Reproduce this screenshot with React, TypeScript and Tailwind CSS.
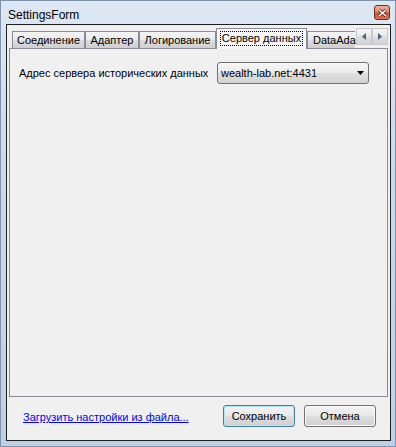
import React from 'react';

const font = "font-['Liberation_Sans',Arial,sans-serif]";

const SettingsForm = () => {
  const tabs = [
    { label: 'Соединение', width: 'w-[73px]' },
    { label: 'Адаптер', width: 'w-[54px]' },
    { label: 'Логирование', width: 'w-[77px]' },
  ];

  return (
    <div className={`w-[396px] h-[447px] flex flex-col border border-[#8193ab] bg-[linear-gradient(to_bottom,#dde8f4_0%,#cddcee_30%,#bcd0e7_100%)] ${font}`}>
      {/* title bar */}
      <div className="h-[23px] flex items-start justify-between pl-[7px] pr-[5px]">
        <span className="text-[12px] leading-[14px] mt-[7px] text-black">SettingsForm</span>
        <button className="mt-[4px] w-[16px] h-[15px] rounded-[3px] border border-[#6e2d22] bg-[linear-gradient(to_bottom,#eeb6a4_0%,#e0846a_45%,#cf5536_55%,#de7356_100%)] flex items-center justify-center">
          <svg width="9" height="8" viewBox="0 0 9 8">
            <path d="M1 1 L8 7 M8 1 L1 7" stroke="#5a1e14" strokeWidth="3" />
            <path d="M1 1 L8 7 M8 1 L1 7" stroke="#ffffff" strokeWidth="1.6" />
          </svg>
        </button>
      </div>

      {/* client area */}
      <div className="ml-[5px] mr-[4px] h-[417px] border border-[#1e1e1e] bg-[#f0f0f0] flex flex-col">
        {/* tab strip */}
        <div className="mt-[3px] h-[20px] flex items-end pl-[5px] mr-[2px] relative">
          {tabs.map((tab) => (
            <div
              key={tab.label}
              className={`${tab.width} h-[17px] shrink-0 border border-b-0 border-[#898c95] bg-[linear-gradient(to_bottom,#f4f4f4_0%,#ebebeb_45%,#dcdcdc_55%,#cfcfcf_100%)] flex items-center justify-center text-[11px] text-black`}
            >
              {tab.label}
            </div>
          ))}
          <div className="w-[91px] h-[21px] shrink-0 -mb-px relative z-10 border border-b-0 border-[#898c95] bg-[#f6f6f6] flex items-start justify-center pt-[2px]">
            <span className="text-[11px] leading-[13px] px-px border border-dotted border-black text-black whitespace-nowrap">
              Сервер данных
            </span>
          </div>
          <div className="w-[48px] h-[17px] shrink-0 border border-b-0 border-r-0 border-[#898c95] bg-[linear-gradient(to_bottom,#f4f4f4_0%,#ebebeb_45%,#dcdcdc_55%,#cfcfcf_100%)] flex items-center pl-[5px] text-[11px] text-black whitespace-nowrap">
            DataAda
          </div>
          {/* scroll arrows */}
          <div className="absolute right-0 top-0 flex">
            {['left', 'right'].map((dir) => (
              <div
                key={dir}
                className="w-[16px] h-[17px] border border-[#c9c9c9] bg-[linear-gradient(to_bottom,#f4f4f4_0%,#ebebeb_45%,#dcdcdc_55%,#d4d4d4_100%)] flex items-center justify-center"
              >
                <svg width="4" height="7" viewBox="0 0 4 7">
                  <path d={dir === 'left' ? 'M4 0 L0 3.5 L4 7 Z' : 'M0 0 L4 3.5 L0 7 Z'} fill="#4d6185" />
                </svg>
              </div>
            ))}
          </div>
        </div>

        {/* tab page */}
        <div className="mx-[2px] h-[349px] border border-[#898c95] bg-[#f0f0f0] pl-[9px] pt-[13px]">
          <div className="flex items-center">
            <span className="w-[198px] text-[11px] text-black">Адрес сервера исторических данных</span>
            <div className="w-[152px] h-[22px] rounded-[3px] border border-[#707070] bg-[linear-gradient(to_bottom,#f6f6f6_0%,#ececec_45%,#dedede_55%,#d3d3d3_100%)] flex items-center justify-between pl-[3px] pr-[4px]">
              <span className="text-[11px] text-black">wealth-lab.net:4431</span>
              <svg width="7" height="4" viewBox="0 0 7 4">
                <path d="M0 0 L7 0 L3.5 4 Z" fill="#000000" />
              </svg>
            </div>
          </div>
        </div>

        {/* footer */}
        <div className="flex-1 flex items-start pt-[8px] pl-[16px] pr-[14px]">
          <a href="#" className="mt-[4px] text-[11px] text-[#0000ff] underline">
            Загрузить настройки из файла...
          </a>
          <div className="ml-auto flex gap-[9px]">
            <button className="w-[72px] h-[22px] rounded-[3px] border border-[#3c7fb1] shadow-[inset_0_0_0_1px_#b6e4f7] bg-[linear-gradient(to_bottom,#f2f2f2_0%,#ebebeb_45%,#dddddd_55%,#cfcfcf_100%)] text-[11px] text-black">
              Сохранить
            </button>
            <button className="w-[72px] h-[22px] rounded-[3px] border border-[#707070] shadow-[inset_0_0_0_1px_#fcfcfc] bg-[linear-gradient(to_bottom,#f2f2f2_0%,#ebebeb_45%,#dddddd_55%,#cfcfcf_100%)] text-[11px] text-black">
              Отмена
            </button>
          </div>
        </div>
      </div>
    </div>
  );
};

export default function App() {
  return <SettingsForm />;
}
